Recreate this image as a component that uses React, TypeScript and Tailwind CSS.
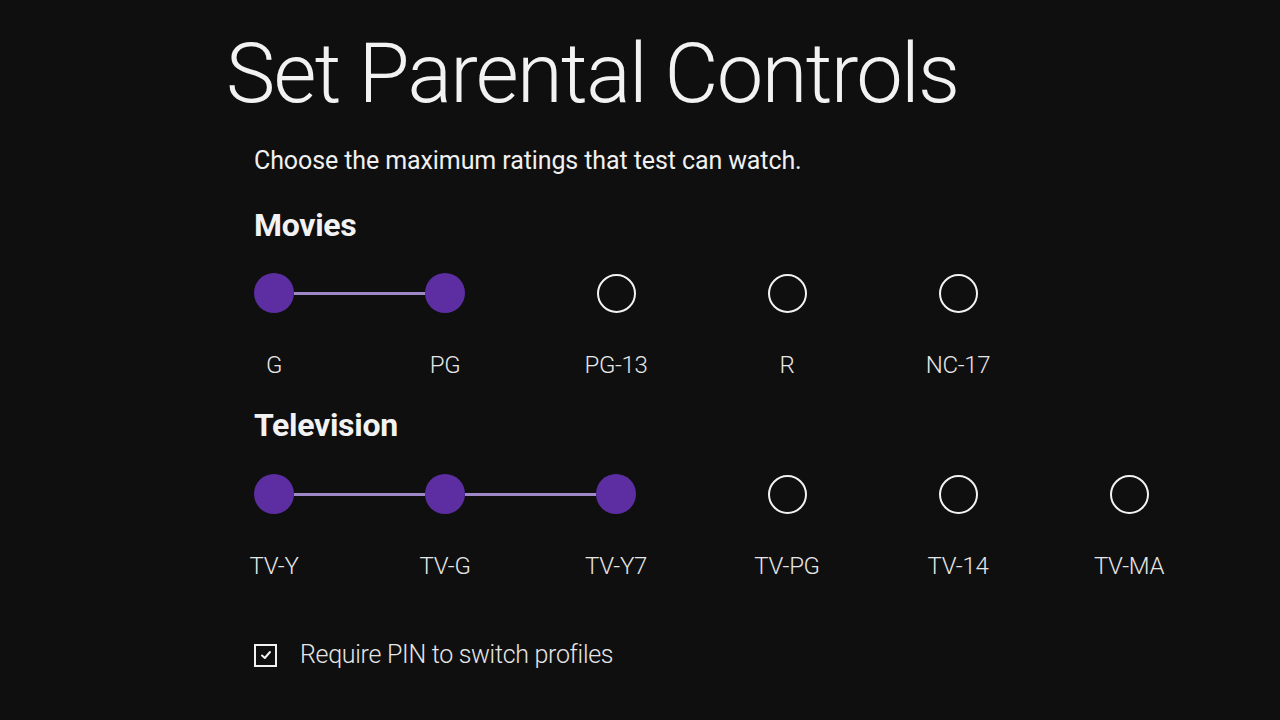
import React from "react";

type Item = { label: string; on: boolean };

const movies: Item[] = [
  { label: "G", on: true },
  { label: "PG", on: true },
  { label: "PG-13", on: false },
  { label: "R", on: false },
  { label: "NC-17", on: false },
];

const tv: Item[] = [
  { label: "TV-Y", on: true },
  { label: "TV-G", on: true },
  { label: "TV-Y7", on: true },
  { label: "TV-PG", on: false },
  { label: "TV-14", on: false },
  { label: "TV-MA", on: false },
];

function Dot({ on }: { on: boolean }) {
  return on ? (
    <div className="w-10 h-10 rounded-full bg-[#5c2ea2] shrink-0" />
  ) : (
    <div className="w-10 h-10 flex items-center justify-center shrink-0">
      <div className="w-[39px] h-[39px] rounded-full border-2 border-[#f2f2f2]" />
    </div>
  );
}

function Rating({ items }: { items: Item[] }) {
  return (
    <div className="flex flex-col">
      <div className="flex items-center h-10">
        {items.map((it, i) => (
          <React.Fragment key={it.label}>
            {i > 0 && (
              <div
                className={
                  "w-[131px] h-[3px] shrink-0 " +
                  (it.on && items[i - 1].on ? "bg-[#9f88c8]" : "bg-transparent")
                }
              />
            )}
            <Dot on={it.on} />
          </React.Fragment>
        ))}
      </div>
      <div className="flex mt-[38px] gap-[131px]">
        {items.map((it) => (
          <div key={it.label} className="w-10 shrink-0 flex justify-center">
            <span className="whitespace-nowrap text-[24px] leading-[28px] text-[#e6e6e6] font-light tracking-[-0.3px]">
              {it.label}
            </span>
          </div>
        ))}
      </div>
    </div>
  );
}

export default function App() {
  return (
    <div
      className="w-[1280px] h-[720px] bg-[#0f0f0f] overflow-hidden text-white"
      style={{ fontFamily: "Roboto, 'Noto Sans', sans-serif" }}
    >
      <div className="flex flex-col pl-[254px] pt-[32px]">
        <h1 className="-ml-[28px] text-[83px] leading-[84px] font-light tracking-[-1.65px] text-[#f2f2f2]">
          Set Parental Controls
        </h1>
        <p className="mt-[30px] text-[25px] leading-[30px] text-[#f0f0f0] tracking-[-0.1px]">
          Choose the maximum ratings that test can watch.
        </p>
        <h2 className="mt-[30px] text-[32px] leading-[38px] font-bold text-[#f2f2f2] tracking-[-0.3px]">
          Movies
        </h2>
        <div className="mt-[29px]">
          <Rating items={movies} />
        </div>
        <h2 className="mt-[27px] text-[32px] leading-[38px] font-bold text-[#f2f2f2] tracking-[-0.3px]">
          Television
        </h2>
        <div className="mt-[30px]">
          <Rating items={tv} />
        </div>
        <div className="mt-[60px] flex items-center gap-[23px]">
          <div className="w-[23px] h-[23px] border-2 border-[#f2f2f2] flex items-center justify-center">
            <svg width="12" height="12" viewBox="0 0 12 12">
              <path d="M2 6.5 L4.8 9 L10 3" fill="none" stroke="#f2f2f2" strokeWidth="2" strokeLinecap="round" strokeLinejoin="round" />
            </svg>
          </div>
          <span className="text-[25px] leading-[30px] text-[#e6e6e6] font-light tracking-[-0.3px]">
            Require PIN to switch profiles
          </span>
        </div>
      </div>
    </div>
  );
}
